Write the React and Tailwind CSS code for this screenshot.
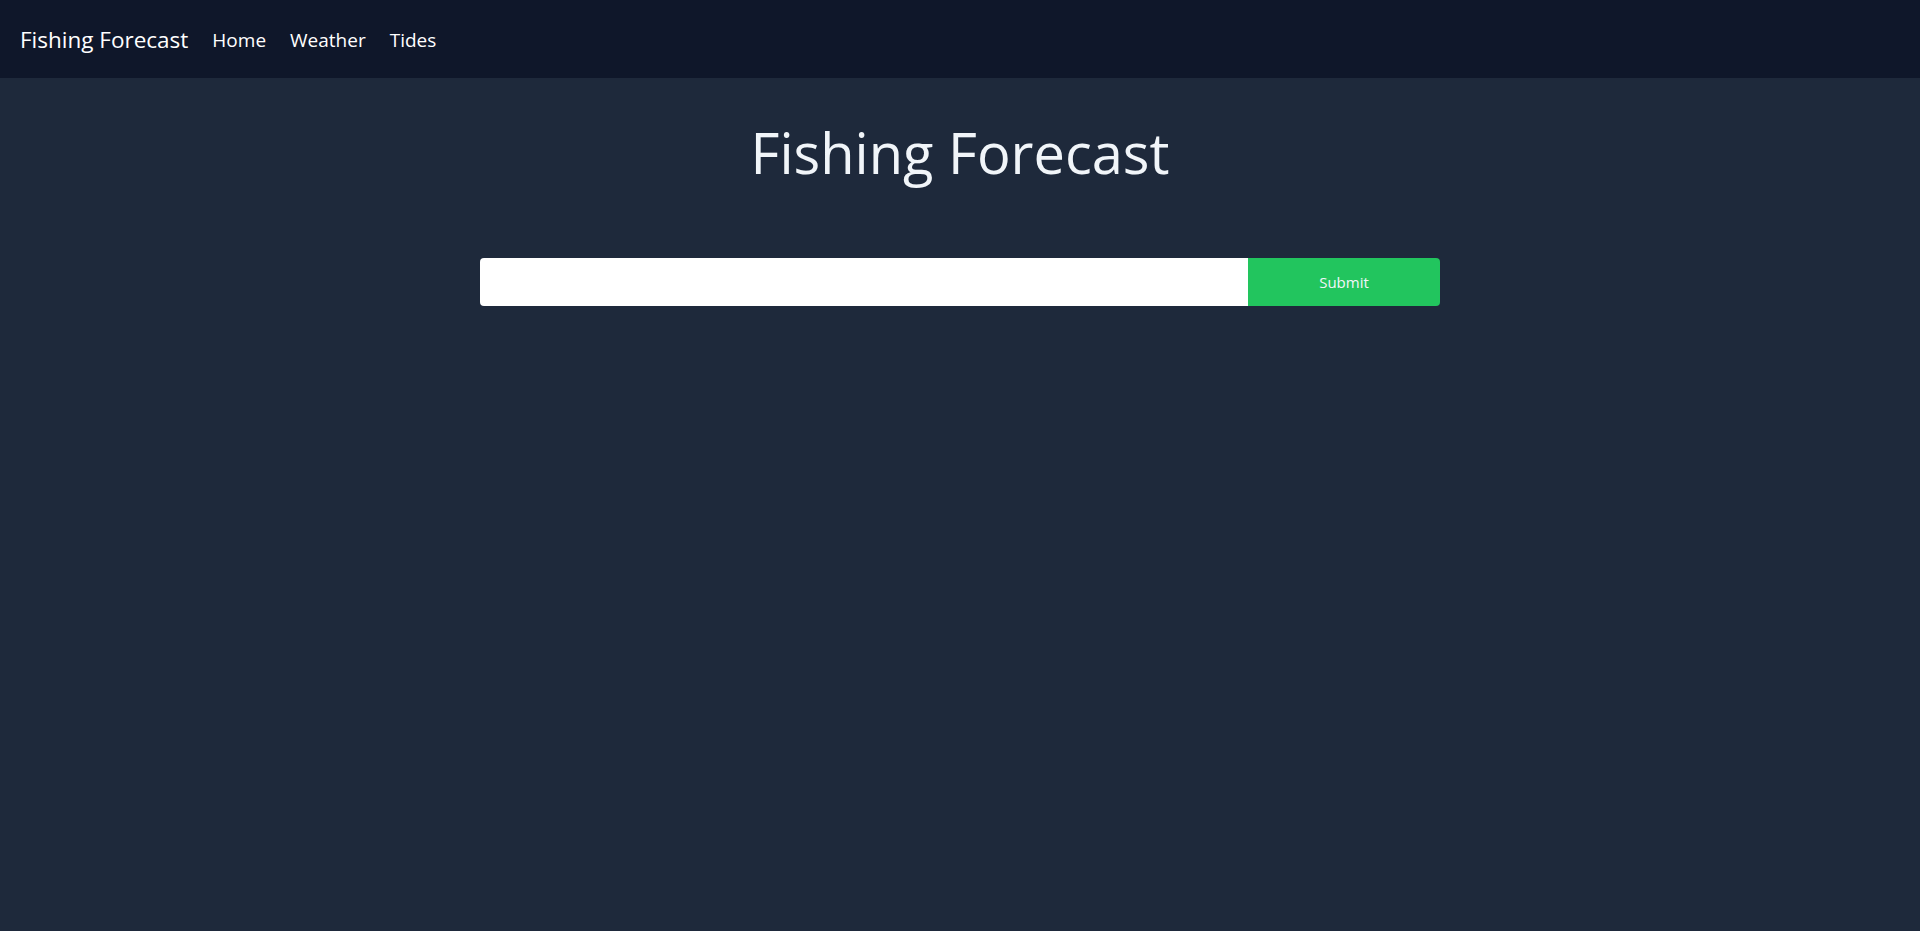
import React, { useState } from 'react';

const App = () => {
  const [location, setLocation] = useState('');

  return (
    <div className="min-h-screen w-full bg-[#1e293b] text-slate-100" style={{ fontFamily: '"Open Sans", "Noto Sans", sans-serif' }}>
      {/* Top navigation */}
      <nav className="flex h-[78px] items-center bg-[#0f172a] px-5 pt-[2px]">
        <a href="#" className="text-[22.5px] text-white">Fishing Forecast</a>
        <div className="ml-6 flex items-center gap-6 text-[19px] text-white">
          <a href="#">Home</a>
          <a href="#">Weather</a>
          <a href="#">Tides</a>
        </div>
      </nav>

      <main className="flex flex-col items-center">
        <h1 className="mt-[46px] text-[56px] leading-none text-slate-100">Fishing Forecast</h1>

        {/* Search form */}
        <form className="mt-[78px] flex w-[960px]" onSubmit={(e) => e.preventDefault()}>
          <input
            type="text"
            value={location}
            onChange={(e) => setLocation(e.target.value)}
            className="h-12 flex-1 rounded-l bg-white px-3 text-gray-900 outline-none"
          />
          <button type="submit" className="h-12 w-48 rounded-r bg-[#22c55e] text-[15px] text-slate-100">
            Submit
          </button>
        </form>
      </main>
    </div>
  );
};

export default App;
